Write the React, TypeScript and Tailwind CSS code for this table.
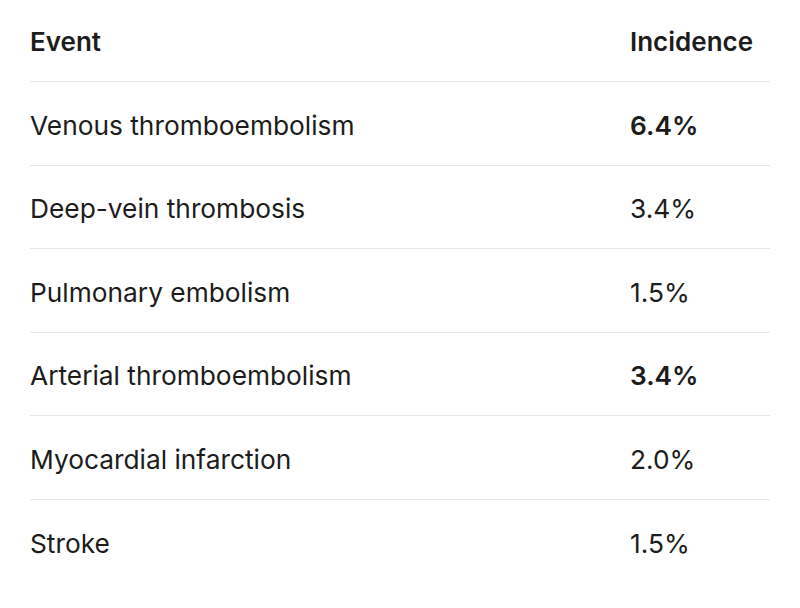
import React from "react";

const rows: { event: string; value: string; bold?: boolean }[] = [
  { event: "Venous thromboembolism", value: "6.4%", bold: true },
  { event: "Deep-vein thrombosis", value: "3.4%" },
  { event: "Pulmonary embolism", value: "1.5%" },
  { event: "Arterial thromboembolism", value: "3.4%", bold: true },
  { event: "Myocardial infarction", value: "2.0%" },
  { event: "Stroke", value: "1.5%" },
];

export default function App() {
  return (
    <div
      className="w-[800px] h-[608px] bg-white px-[30px] text-[#1c1c1c]"
      style={{ fontFamily: "Inter, 'Noto Sans', sans-serif" }}
    >
      <div className="flex h-[82px] items-center border-b border-[#e6e6e6] pt-[2px] text-[26px] font-semibold">
        <div className="flex-1">Event</div>
        <div className="w-[140px]">Incidence</div>
      </div>
      {rows.map((r, i) => (
        <div
          key={r.event}
          className={
            "flex h-[83.5px] items-center pt-[4px] text-[26.3px] " +
            (i < rows.length - 1 ? "border-b border-[#e6e6e6]" : "")
          }
        >
          <div className="flex-1">{r.event}</div>
          <div className={"w-[140px] " + (r.bold ? "font-semibold" : "")}>{r.value}</div>
        </div>
      ))}
    </div>
  );
}
